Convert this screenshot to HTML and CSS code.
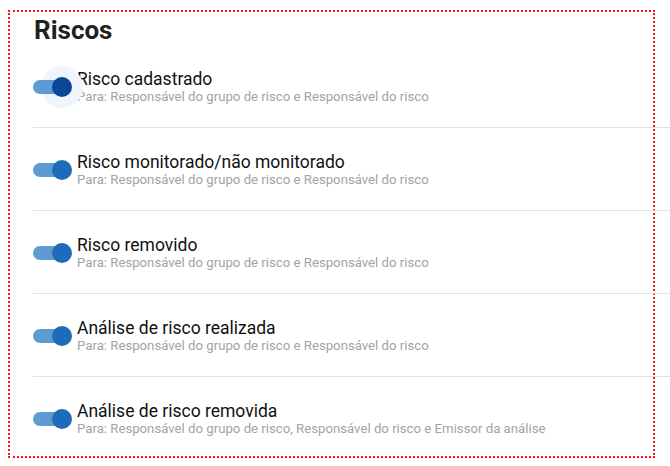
FILE: index.html
```html
<!DOCTYPE html>
<html lang="pt-BR">
<head>
    <meta charset="UTF-8">
    <meta name="viewport" content="width=device-width, initial-scale=1.0">
    <title>Notificações - Riscos</title>
    <link rel="stylesheet" href="styles.css">
</head>
<body>
    <div class="panel">
        <h2 class="panel-title">Riscos</h2>

        <div class="list">
            <div class="row">
                <span class="switch focused"><span class="switch-track"></span></span>
                <div class="row-text">
                    <div class="row-title">Risco cadastrado</div>
                    <div class="row-sub">Para: Responsável do grupo de risco e Responsável do risco</div>
                </div>
            </div>
            <div class="row">
                <span class="switch"><span class="switch-track"></span></span>
                <div class="row-text">
                    <div class="row-title">Risco monitorado/não monitorado</div>
                    <div class="row-sub">Para: Responsável do grupo de risco e Responsável do risco</div>
                </div>
            </div>
            <div class="row">
                <span class="switch"><span class="switch-track"></span></span>
                <div class="row-text">
                    <div class="row-title">Risco removido</div>
                    <div class="row-sub">Para: Responsável do grupo de risco e Responsável do risco</div>
                </div>
            </div>
            <div class="row">
                <span class="switch"><span class="switch-track"></span></span>
                <div class="row-text">
                    <div class="row-title">Análise de risco realizada</div>
                    <div class="row-sub">Para: Responsável do grupo de risco e Responsável do risco</div>
                </div>
            </div>
            <div class="row">
                <span class="switch"><span class="switch-track"></span></span>
                <div class="row-text">
                    <div class="row-title">Análise de risco removida</div>
                    <div class="row-sub">Para: Responsável do grupo de risco, Responsável do risco e Emissor da análise</div>
                </div>
            </div>
        </div>
    </div>
</body>
</html>
```

FILE: styles.css
```css
body {
    margin: 0;
    background-color: #fff;
    color: #1a1a1a;
    font-family: Roboto, "Noto Sans", Arial, sans-serif;
    overflow: hidden;
}
.panel {
    box-sizing: border-box;
    margin: 10px 0 0 8px;
    width: 647px;
    height: 448px;
    border: 2px dotted #ff1414;
}
.panel-title {
    margin: 0;
    padding: 4px 0 0 24px;
    font-size: 26px;
    line-height: 29px;
    font-weight: 700;
    color: #212121;
}
.list {
    margin-left: 23px;
    width: 637px;
}
.row {
    display: flex;
    align-items: center;
    height: 82px;
    border-bottom: 1px solid #e2e2e2;
}
.switch {
    position: relative;
    flex: none;
    width: 34px;
    height: 14px;
    margin-top: 2px;
    margin-right: 10px;
}
.switch-track {
    position: relative;
    display: block;
    width: 34px;
    height: 14px;
    border-radius: 7px;
    background-color: #5e9bd2;
}
.switch::after {
    content: "";
    position: absolute;
    left: 19px;
    top: -3px;
    width: 20px;
    height: 20px;
    border-radius: 50%;
    background-color: #1d6cb9;
}
.switch.focused::before {
    content: "";
    position: absolute;
    left: 8px;
    top: -14px;
    width: 42px;
    height: 42px;
    border-radius: 50%;
    background-color: #f0f5fc;
}
.switch.focused::after {
    background-color: #0b4799;
}
.row-text {
    padding-top: 1px;
}
.row-title {
    font-size: 17.5px;
    line-height: 20px;
    color: #111;
}
.row-sub {
    font-size: 13.2px;
    line-height: 16px;
    color: #a3a3a3;
}
```
